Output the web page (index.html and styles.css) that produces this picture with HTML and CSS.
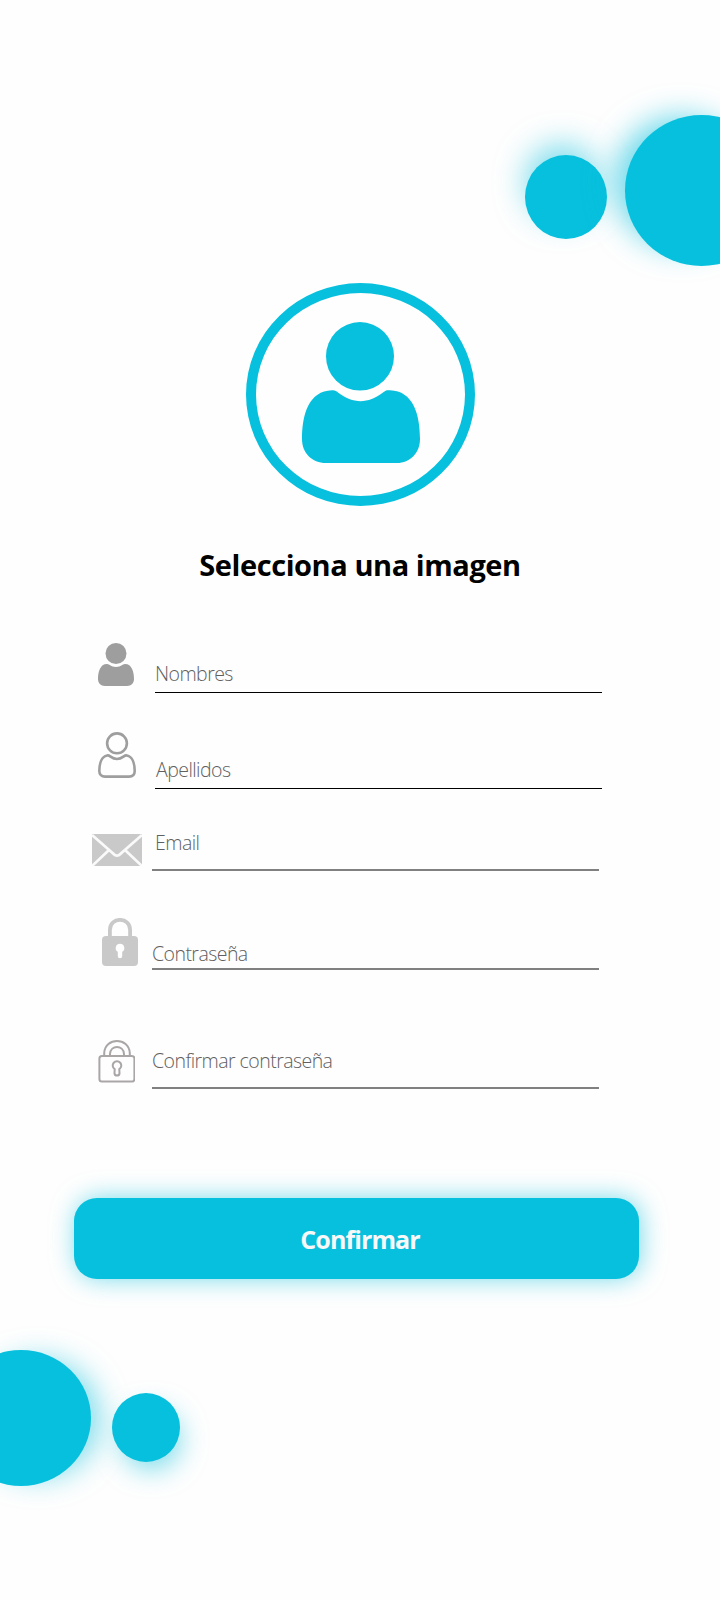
FILE: index.html
```html
<!DOCTYPE html>
<html lang="es">
<head>
<meta charset="utf-8">
<title>Registro</title>
<link rel="stylesheet" href="styles.css">
</head>
<body>
<main class="screen">
  <header class="bubbles-top">
    <div class="bubble bubble-top-small"></div>
    <div class="bubble bubble-top-large"></div>
  </header>

  <div class="avatar">
    <svg class="avatar-icon" width="118" height="142" viewBox="0 0 118 142">
      <ellipse cx="58" cy="34.3" rx="34" ry="34.2"/>
      <path d="M30 68.300C33 68 34 69 36 70.500C51 82 66 82 81 70.500C84 68 85 68 88 68.300C111 69 118 92 118 117C118 131 108 141 95 141H24C10 141 0 131 0 117C0 92 7 69 30 68.300Z"/>
    </svg>
  </div>
  <h1 class="title">Selecciona una imagen</h1>

  <form class="form">
    <div class="field field-first">
      <svg class="icon" width="36" height="43" viewBox="0 0 36 43">
        <g fill="#9e9e9e"><circle cx="18" cy="10.500" r="10.500"/><path d="M9 21C12 21 12.500 24 18 24C23.500 24 24 21 27 21C34 21 36 29 36 36C36 40 33.500 43 29 43H7C2.500 43 0 40 0 36C0 29 2 21 9 21Z"/></g>
      </svg>
      <label class="label">Nombres</label>
    </div>
    <div class="field field-last">
      <svg class="icon" width="38" height="46" viewBox="0 0 38 46">
        <g fill="none" stroke="#9e9e9e" stroke-width="2.600"><circle cx="19" cy="11.300" r="9.900"/><path d="M9 23.500C12 22.500 13 27 19 27C25 27 26 22.500 29 23.500C34 24.500 36.700 31 36.700 39C36.700 42.500 34.500 44.600 31 44.600H7C3.500 44.600 1.300 42.500 1.300 39C1.300 31 4 24.500 9 23.500Z"/></g>
      </svg>
      <label class="label">Apellidos</label>
    </div>
    <div class="field field-email">
      <svg class="icon" width="50" height="32" viewBox="0 0 50 32">
        <path fill="#c9c9c9" d="M0 0H50V32H0Z"/>
        <path fill="none" stroke="#fafafa" stroke-width="2.700" d="M0 1L20 18.500C24 22.700 26 22.700 30 18.500L50 1M17 16L0 32M33 16L50 32"/>
      </svg>
      <label class="label">Email</label>
    </div>
    <div class="field field-password">
      <svg class="icon" width="36" height="48" viewBox="0 0 36 48">
        <path fill="none" stroke="#c9c9c9" stroke-width="3.800" d="M7.900 20V12C7.900-1.500 28.100-1.500 28.100 12V20"/>
        <rect y="18" width="36" height="30" rx="4" fill="#c9c9c9"/>
        <path fill="#fff" d="M18 25.800a4.300 4.300 0 0 1 2.200 8V38a2.200 2.200 0 0 1-4.400 0V33.800a4.300 4.300 0 0 1 2.200-8Z"/>
      </svg>
      <label class="label">Contraseña</label>
    </div>
    <div class="field field-confirm">
      <svg class="icon" width="37" height="43" viewBox="0 0 37 43">
        <g fill="none" stroke="#aaa6a6" stroke-width="2"><rect x="1.400" y="16" width="35" height="25.500" rx="2.500"/><path d="M6.200 16V13C7-3 31-3 31.800 13V16M12 16V14C12.500 4.500 25.500 4.500 26 14V16M16.700 29.200A4.300 4.300 0 1 1 21.300 29.200L21.500 33.500Q21.200 35.500 19 35.500T16.500 33.500Z"/></g>
      </svg>
      <label class="label">Confirmar contraseña</label>
    </div>
    <button class="submit" type="button">Confirmar</button>
  </form>

  <footer class="bubbles-bottom">
    <div class="bubble bubble-bottom-large"></div>
    <div class="bubble bubble-bottom-small"></div>
  </footer>
</main>
</body>
</html>
```
FILE: styles.css
```css
* { box-sizing: border-box; }
body { margin: 0; background: #fefefe; font-family: "Open Sans", "Noto Sans", sans-serif; }
.screen { width: 720px; height: 1600px; overflow: hidden; padding-top: 115px; background: #fefefe; }

.bubble { flex: none; border-radius: 50%; background: #07c0dd; }
.bubbles-top { display: flex; height: 151px; padding-left: 525px; gap: 18px; }
.bubble-top-small { width: 82px; height: 84px; margin-top: 40px; box-shadow: -4px -15px 30px -4px rgba(7, 192, 221, .5); }
.bubble-top-large { width: 153px; height: 151px; box-shadow: -20px -8px 30px -10px rgba(7, 192, 221, .6); }
.bubbles-bottom { display: flex; gap: 21px; margin: 71px 0 0 -49px; }
.bubble-bottom-large { width: 140px; height: 136px; box-shadow: 17px 0 28px -8px rgba(7, 192, 221, .5); }
.bubble-bottom-small { width: 68px; height: 69px; margin-top: 43px; box-shadow: 5px 12px 26px -4px rgba(7, 192, 221, .5); }

.avatar { width: 229px; height: 223px; margin: 17px 0 0 246px; padding: 29px 0 0 46px; border: 10px solid #07c0dd; border-radius: 50%; }
.avatar-icon { display: block; fill: #07c0dd; }
.title { margin: 39px 0 0; text-align: center; font-size: 29px; line-height: 40px; font-weight: 700; color: #000; letter-spacing: -.43px; }

.form { display: flex; flex-direction: column; }
.field { display: flex; align-items: flex-end; }
.icon { flex: none; display: block; }
.label { width: 447px; font-size: 19.5px; line-height: 24px; font-weight: 300; color: #606060; white-space: nowrap; letter-spacing: -.55px; }
.field-first { height: 108px; padding-left: 98px; gap: 21px; }
.field-first .icon { margin-bottom: 7px; }
.field-first .label { padding-bottom: 6px; border-bottom: 1px solid #000; }
.field-last { height: 96px; padding-left: 98px; gap: 19px; }
.field-last .icon { margin-bottom: 11px; }
.field-last .label { padding: 0 0 6px 1px; border-bottom: 1px solid #000; }
.field-email { height: 82px; padding-left: 92px; gap: 10px; }
.field-email .icon { margin-bottom: 5px; }
.field-email .label { padding: 0 0 14px 3px; border-bottom: 2px solid #808080; }
.field-password { height: 99px; padding-left: 102px; gap: 14px; }
.field-password .icon { margin-bottom: 4px; }
.field-password .label { padding-bottom: 2px; border-bottom: 2px solid #808080; }
.field-confirm { height: 119px; padding-left: 98px; gap: 17px; }
.field-confirm .icon { margin-bottom: 6px; }
.field-confirm .label { padding-bottom: 14px; border-bottom: 2px solid #808080; }

.submit { width: 565px; height: 81px; margin: 109px 0 0 74px; padding: 1px 0 0 7px; border: 0; border-radius: 23px; background: #07c0dd; box-shadow: 2px 0 25px rgba(7, 192, 221, .55); color: #f8f8f8; font: 700 25px/34px "Open Sans", "Noto Sans", sans-serif; letter-spacing: -.9px; font-variant-ligatures: none; }
```
